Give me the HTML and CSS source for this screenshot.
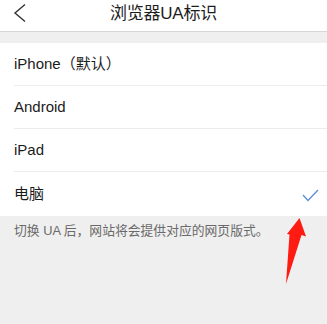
FILE: index.html
```html
<!DOCTYPE html>
<html lang="zh">
<head>
<meta charset="utf-8">
<title>浏览器UA标识</title>
<link rel="stylesheet" href="styles.css">
</head>
<body>
<div class="page">
  <header class="nav">
    <div class="nav-left">
      <svg class="back" width="14" height="20" viewBox="0 0 14 20"><polyline points="12,1.5 2,10 12,18.5" fill="none" stroke="#333" stroke-width="1.4" stroke-linejoin="miter"/></svg>
    </div>
    <div class="nav-title">浏览器UA标识</div>
    <div class="nav-right"></div>
  </header>
  <div class="gap"></div>
  <ul class="list">
    <li class="row">iPhone（默认）</li>
    <li class="row">Android</li>
    <li class="row">iPad</li>
    <li class="row row-last">电脑
      <svg class="check" width="17" height="13" viewBox="0 0 17 13"><polyline points="1,6 6,11.5 16,1" fill="none" stroke="#5b8fd8" stroke-width="1.3"/></svg>
    </li>
  </ul>
  <p class="note">切换 UA 后，网站将会提供对应的网页版式。</p>
  <svg class="arrow" width="30" height="70" viewBox="280 216 30 70"><polygon points="299.5,218 306,236.5 301.5,235 286,284 289.5,234.5 287,234" fill="#ff1a12"/></svg>
</div>
</body>
</html>
```

FILE: styles.css
```css
* { box-sizing: border-box; }
html, body { margin: 0; padding: 0; }
body {
  background: #efefef;
  font-family: "Liberation Sans", "Noto Sans CJK SC", sans-serif;
  color: #1b1b1b;
}
.page { position: relative; width: 327px; height: 324px; overflow: hidden; }
.nav {
  height: 32px;
  background: #fff;
  border-bottom: 1px solid #d6d6d6;
  display: grid;
  grid-template-columns: 1fr auto 1fr;
  align-items: start;
}
.nav-left { padding: 3px 0 0 13px; display: flex; }
.nav-title {
  font-size: 17px;
  line-height: 26px;
  padding-top: 1px;
  color: #1d1d1d;
  letter-spacing: -0.2px;
}
.gap { height: 11px; }
.list {
  list-style: none;
  margin: 0;
  padding: 0 0 0 14px;
  background: #fff;
}
.row {
  height: 43px;
  border-bottom: 1px solid #ececec;
  display: flex;
  align-items: center;
  justify-content: space-between;
  padding-right: 8px;
  font-size: 15px;
  line-height: 20px;
}
.row-last { border-bottom: none; height: 44px; }
.check { margin-top: 2px; }
.note {
  margin: 0;
  padding: 7px 14px 0;
  font-size: 12.8px;
  line-height: 16px;
  color: #6a6a6a;
}
.arrow { position: absolute; left: 280px; top: 216px; }
```
